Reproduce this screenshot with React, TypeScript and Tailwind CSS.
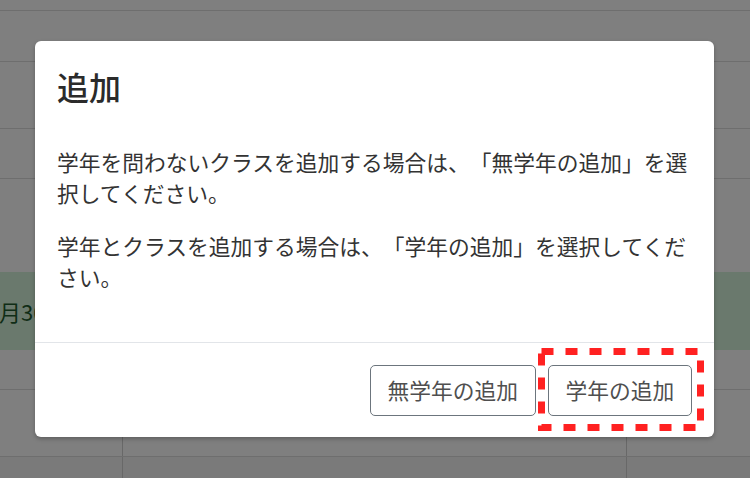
const FONT = '"Noto Sans CJK JP", "Noto Sans", sans-serif';

function TableBackdrop() {
  return (
    <div className="flex flex-col w-full h-full bg-white">
      <div className="h-[11px] shrink-0 border-b border-[#dcdcdc]" />
      <div className="h-[51px] shrink-0 border-b border-[#dcdcdc]" />
      <div className="h-[67px] shrink-0 border-b border-[#dcdcdc]" />
      <div className="h-[50px] shrink-0 border-b border-[#dcdcdc]" />
      <div className="h-[93px] shrink-0" />
      <div className="h-[78px] shrink-0 bg-[#d4f2da] flex items-center overflow-hidden">
        <span className="-ml-[1px] text-[22px] text-[#1f5a2e] whitespace-nowrap">月30日</span>
      </div>
      <div className="h-[40px] shrink-0 border-b border-[#dcdcdc]" />
      <div className="h-[67px] shrink-0 border-b border-[#dcdcdc] grid grid-cols-[123px_504px_1fr]">
        <div className="border-r border-[#d0d0d0]" />
        <div className="border-r border-[#d0d0d0]" />
        <div />
      </div>
      <div className="flex-1 bg-[#f4f4f4] grid grid-cols-[123px_504px_1fr]">
        <div className="border-r border-[#d0d0d0]" />
        <div className="border-r border-[#d0d0d0]" />
        <div />
      </div>
    </div>
  );
}

export default function App() {
  return (
    <div
      className="relative w-[750px] h-[478px] overflow-hidden [text-spacing-trim:space-all]"
      style={{ fontFamily: FONT }}
    >
      <TableBackdrop />

      {/* modal backdrop */}
      <div className="absolute inset-0 bg-black/50" />

      {/* dialog */}
      <div className="absolute left-[35px] top-[41px] w-[679px] h-[396px] bg-white rounded-[6px] shadow-[0_2px_4px_rgba(0,0,0,0.25)] flex flex-col">
        <div className="px-[22px] pt-[27px]">
          <h2 className="text-[32px] leading-[37px] font-medium text-[#2b2b2b]">追加</h2>
        </div>
        <div className="flex-1 px-[22px] pt-[41px] text-[21.75px] leading-[31px] text-[#333]">
          <p>学年を問わないクラスを追加する場合は、「無学年の追加」を選択してください。</p>
          <p className="mt-[22px]">学年とクラスを追加する場合は、「学年の追加」を選択してください。</p>
        </div>
        <div className="h-[95px] border-t border-[#e2e5e9] flex items-center justify-end gap-[12px] px-[22px]">
          <button className="h-[51px] px-[16.75px] rounded-[5px] border border-[#6c757d] bg-white text-[21.75px] text-[#4f4f4f]">
            無学年の追加
          </button>
          <button className="h-[51px] px-[16.75px] rounded-[5px] border border-[#6c757d] bg-white text-[21.75px] text-[#4f4f4f]">
            学年の追加
          </button>
        </div>
      </div>

      {/* red dashed highlight */}
      <svg className="absolute left-[538px] top-[348px]" width="166" height="83" viewBox="0 0 166 83">
        <rect
          x="3.5"
          y="3.5"
          width="159"
          height="76"
          fill="none"
          stroke="#ff2121"
          strokeWidth="7"
          strokeDasharray="12 12"
        />
      </svg>
    </div>
  );
}
